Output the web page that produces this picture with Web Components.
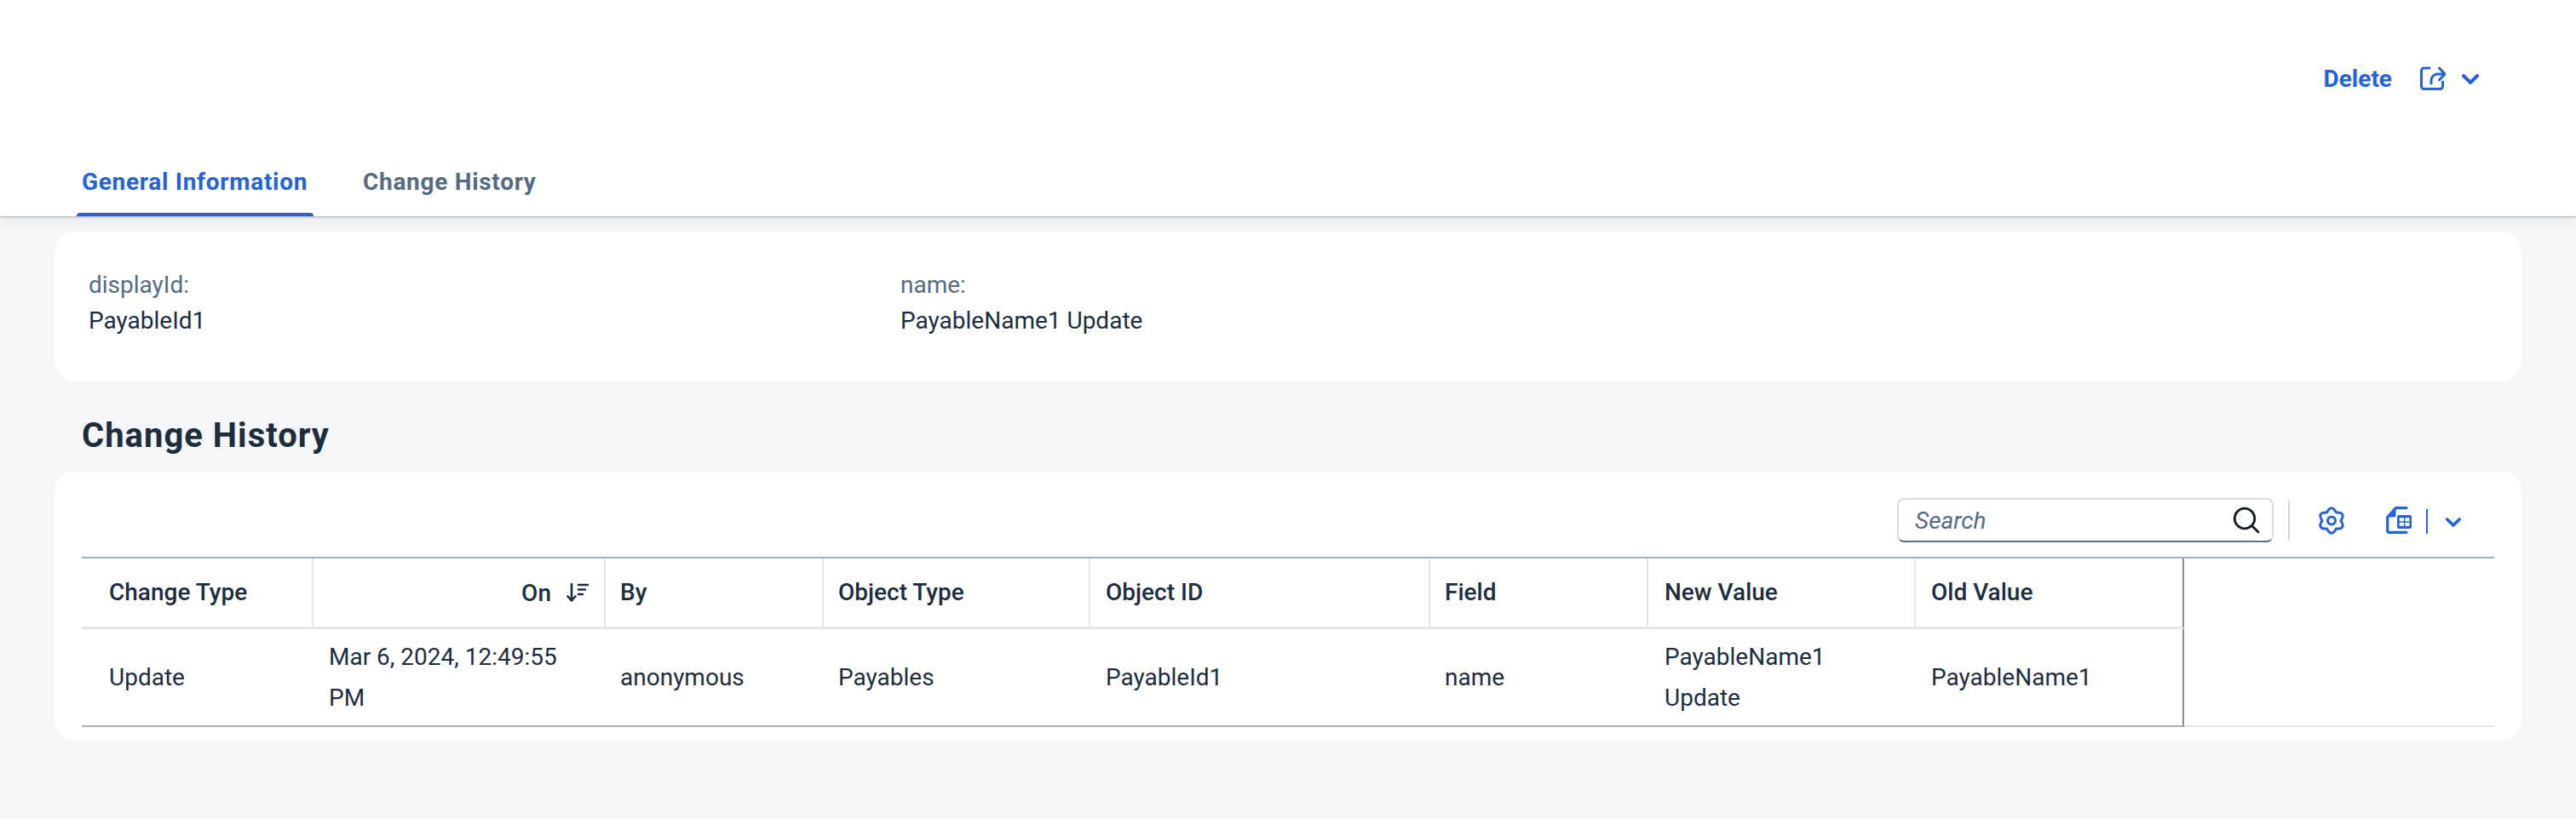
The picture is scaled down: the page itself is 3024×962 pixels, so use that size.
<!DOCTYPE html>
<html>
<head>
<meta charset="utf-8">
<style>
  html, body { margin: 0; background: #f5f6f7; }
  body { font-family: Roboto, "Liberation Sans", sans-serif; font-size: 28px; color: #1d2d3e; }
</style>
</head>
<body>
<object-page>
  <page-header slot="header"></page-header>
  <field-card></field-card>
  <section-title>Change History</section-title>
  <table-card></table-card>
</object-page>

<script>
// shared icons
const ICONS = {
    chevron: '<svg width="20" height="12" viewBox="0 0 20 12" fill="none" stroke="currentColor" stroke-width="4" stroke-linecap="round" stroke-linejoin="round"><path d="M2 2l8 8 8-8"/></svg>',
    share: '<svg width="30" height="28" viewBox="0 0 30 28" fill="none" stroke="currentColor" stroke-width="3" stroke-linecap="round" stroke-linejoin="round"><path d="M11 2H4.500A3 3 0 0 0 1.500 5v18.500a3 3 0 0 0 3 3h19a3 3 0 0 0 3-3V18"/><path d="M13 20v-3.500A7.500 7.500 0 0 1 20.500 9h8"/><path d="M22.500 2l6.500 7-6.500 7"/></svg>',
    search: '<svg width="32" height="32" viewBox="0 0 32 32" fill="none" stroke="#131e29" stroke-width="2.800" stroke-linecap="round"><circle cx="14" cy="14" r="11.800"/><path d="M22.500 22.500l7.500 7.500"/></svg>',
    gear: '<svg width="32" height="33" viewBox="0 0 32 33" fill="none" stroke="currentColor" stroke-width="3" stroke-linejoin="round"><path d="M27 16.500Q33.320 26.500 21.500 26.030 16 36.500 10.500 26.030-1.320 26.500 5 16.500-1.320 6.500 10.500 6.970 16-3.500 21.500 6.970 33.320 6.500 27 16.500Z"/><circle cx="16" cy="16.500" r="4.500"/></svg>',
    exportGrid: '<svg width="30" height="32" viewBox="0 0 30 32"><path d="M24 1.700H11.500L1.700 12.500V28.500a1.800 1.800 0 0 0 1.800 1.800H24" fill="none" stroke="currentColor" stroke-width="3.200" stroke-linecap="round" stroke-linejoin="round"/><path d="M11.500 2L2 12.500h7.500a2 2 0 0 0 2-2z" fill="currentColor"/><path fill="currentColor" fill-rule="evenodd" d="M15 10h13a2 2 0 0 1 2 2v12a2 2 0 0 1-2 2H15a2 2 0 0 1-2-2V12a2 2 0 0 1 2-2zm.700 3.300v4h5.300v-4zm6.600 0v4h5.200v-4zm-6.600 5.500v3.900h5.300v-3.900zm6.600 0v3.900h5.200v-3.900z"/></svg>',
    sortDesc: '<svg width="26" height="24" viewBox="0 0 26 24" fill="none" stroke="#1d2d3e" stroke-width="2.600" stroke-linecap="round" stroke-linejoin="round"><path d="M6 2v19M1.500 16.500L6 21.500l4.500-5"/><path d="M14 3h11M14 8.500h8M14 14h5"/></svg>'
};

class ObjectPage extends HTMLElement {
    constructor() {
        super();
        this.attachShadow({ mode: 'open' }).innerHTML = `
            <style>
                :host { display: flex; flex-direction: column; height: 962px; overflow: hidden; background: #f5f6f7; }
                .content { display: flex; flex-direction: column; padding: 18px 64px 0; }
            </style>
            <slot name="header"></slot>
            <div class="content"><slot></slot></div>`;
    }
}

class PageHeader extends HTMLElement {
    constructor() {
        super();
        this.attachShadow({ mode: 'open' }).innerHTML = `
            <style>
                :host {
                    display: flex; flex-direction: column; height: 254px; box-sizing: border-box;
                    background: #fff; position: relative;
                    box-shadow: 0 1px 2px rgba(34,54,73,.35), 0 4px 14px rgba(34,54,73,.09);
                }
                .actions {
                    display: flex; align-items: center; justify-content: flex-end; height: 184px;
                    padding-right: 114px; color: #2563d6; font-weight: 700; font-size: 28px;
                }
                .delete { margin-right: 33px; }
                .share { display: flex; margin-right: 19px; }
                .chev { display: flex; margin-top: 1px; }
                .tabs { display: flex; padding-left: 90px; gap: 52px; margin-top: -12px; }
                .tab {
                    height: 82px; box-sizing: border-box; padding: 0 6px; line-height: 84px;
                    font-weight: 700; letter-spacing: .7px; color: #556b82; position: relative;
                }
                .tab.on { color: #2563d6; width: 278px; }
                .tab.on::after {
                    content: ""; position: absolute; left: 0; right: 0; bottom: 0; height: 4px;
                    background: #2563d6; border-radius: 4px 4px 0 0;
                }
            </style>
            <div class="actions">
                <span class="delete">Delete</span>
                <span class="share">${ICONS.share}</span>
                <span class="chev">${ICONS.chevron}</span>
            </div>
            <div class="tabs">
                <div class="tab on">General Information</div>
                <div class="tab">Change History</div>
            </div>`;
    }
}

class FieldCard extends HTMLElement {
    constructor() {
        super();
        this.attachShadow({ mode: 'open' }).innerHTML = `
            <style>
                :host {
                    display: grid; grid-template-columns: 953px 1fr; box-sizing: border-box; height: 176px;
                    padding: 43px 40px 53px; background: #fff; border-radius: 24px; line-height: 40px;
                }
                .label { color: #556b82; margin-bottom: 2px; }
            </style>
            <div><div class="label">displayId:</div><div>PayableId1</div></div>
            <div><div class="label">name:</div><div>PayableName1 Update</div></div>`;
    }
}

class SectionTitle extends HTMLElement {
    constructor() {
        super();
        this.attachShadow({ mode: 'open' }).innerHTML = `
            <style>
                :host {
                    display: flex; align-items: flex-end; height: 105px; box-sizing: border-box;
                    padding: 0 0 17px 32px; font-size: 40px; font-weight: 700; letter-spacing: 1px;
                    line-height: 48px; color: #1d2d3e;
                }
            </style>
            <slot></slot>`;
    }
}

class TableToolbar extends HTMLElement {
    constructor() {
        super();
        this.attachShadow({ mode: 'open' }).innerHTML = `
            <style>
                :host {
                    display: flex; align-items: center; justify-content: flex-end; height: 52px;
                    padding-right: 39px; color: #2563d6;
                }
                .search {
                    width: 442px; height: 52px; box-sizing: border-box; display: flex; align-items: center;
                    justify-content: space-between; padding: 0 14px 0 19px; background: #fff;
                    border: 2px solid #d9dee3; border-bottom-color: #5b738b; border-radius: 8px;
                    font-style: italic; color: #556b82;
                }
                .search svg { display: block; }
                .sep { width: 2px; height: 48px; background: #d9d9d9; margin-left: 17px; }
                .gear { display: flex; margin-left: 33px; }
                .export { display: flex; margin-left: 48px; }
                .bar { width: 2px; height: 29px; background: currentColor; margin: 2px 0 0 17px; }
                .chev { display: flex; margin: 4px 0 0 21px; }
                .chev svg { width: 18px; height: 11px; }
            </style>
            <div class="search"><span>Search</span>${ICONS.search}</div>
            <div class="sep"></div>
            <span class="gear">${ICONS.gear}</span>
            <span class="export">${ICONS.exportGrid}</span>
            <div class="bar"></div>
            <span class="chev">${ICONS.chevron}</span>`;
    }
}

class HistoryTable extends HTMLElement {
    constructor() {
        super();
        const cols = [
            ['Change Type', 272, 32, 'Update'],
            ['On', 343, 18, 'Mar 6, 2024, 12:49:55 PM'],
            ['By', 256, 17, 'anonymous'],
            ['Object Type', 313, 17, 'Payables'],
            ['Object ID', 399, 18, 'PayableId1'],
            ['Field', 256, 17, 'name'],
            ['New Value', 314, 19, 'PayableName1 Update'],
            ['Old Value', 315, 18, 'PayableName1']
        ];
        const head = cols.map(([t, , pad], i) => i === 1
            ? `<th style="padding-left:${pad}px" class="sorted"><span>${t}</span>${ICONS.sortDesc}</th>`
            : `<th style="padding-left:${pad}px">${t}</th>`).join('');
        const row = cols.map(([, , pad, v]) => `<td style="padding-left:${pad}px">${v}</td>`).join('');
        this.attachShadow({ mode: 'open' }).innerHTML = `
            <style>
                :host { display: block; margin-top: 17px; }
                table {
                    table-layout: fixed; width: 2832px; border-collapse: separate; border-spacing: 0;
                    border-top: 2px solid #a8b2bd; color: #1d2d3e;
                }
                th {
                    height: 78px; padding: 0 12px 2px 0; box-sizing: content-box; text-align: left; font-weight: 500;
                    border-right: 2px solid #e5e5e5; border-bottom: 3px solid #e5e5e5;
                }
                th.sorted { text-align: right; padding-right: 18px; }
                th.sorted span { margin-right: 18px; vertical-align: middle; }
                th.sorted svg { vertical-align: middle; }
                td {
                    height: 115px; padding: 1px 12px 0 0; line-height: 48px;
                    border-bottom: 2px solid #a8b2bd; box-sizing: border-box;
                }
                th:nth-child(8), td:nth-child(8) { border-right: 2px solid #8a8f96; }
                th:last-child { border: 0; }
                td:last-child { border-bottom-color: #e5e5e5; }
            </style>
            <table>
                <colgroup>
                    ${cols.map(c => `<col style="width:${c[1]}px">`).join('')}
                    <col style="width:364px">
                </colgroup>
                <tr>${head}<th></th></tr>
                <tr>${row}<td></td></tr>
            </table>`;
    }
}

class TableCard extends HTMLElement {
    constructor() {
        super();
        this.attachShadow({ mode: 'open' }).innerHTML = `
            <style>
                :host {
                    display: block; height: 317px; box-sizing: border-box; padding: 32px 32px 0;
                    background: #fff; border-radius: 24px;
                }
            </style>
            <table-toolbar></table-toolbar>
            <history-table></history-table>`;
    }
}

customElements.define('object-page', ObjectPage);
customElements.define('page-header', PageHeader);
customElements.define('field-card', FieldCard);
customElements.define('section-title', SectionTitle);
customElements.define('table-toolbar', TableToolbar);
customElements.define('history-table', HistoryTable);
customElements.define('table-card', TableCard);
</script>
</body>
</html>
